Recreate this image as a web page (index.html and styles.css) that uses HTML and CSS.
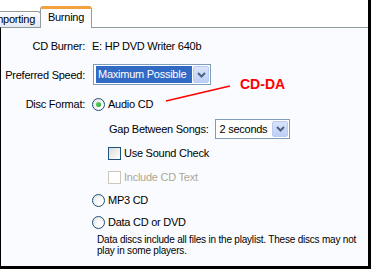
FILE: index.html
```html
<!DOCTYPE html>
<html>
<head>
    <title>Burning</title>
    <link rel="stylesheet" href="styles.css">
</head>
<body>
    <div class="window">
        <div class="tabs">
            <div class="tab tab-off">Importing</div>
            <div class="tab tab-on">Burning</div>
        </div>
        <div class="panel">
            <div class="row r-burner">
                <span class="label">CD Burner:</span>
                <span>E: HP DVD Writer 640b</span>
            </div>
            <div class="row r-speed">
                <span class="label">Preferred Speed:</span>
                <div class="combo combo-speed">
                    <span class="combo-text picked">Maximum Possible</span>
                    <span class="combo-btn"><svg width="9" height="6" viewBox="0 0 9 6"><path d="M1 1 L4.5 4.5 L8 1" fill="none" stroke="#4d6185" stroke-width="2"/></svg></span>
                </div>
            </div>
            <div class="row r-format">
                <span class="label">Disc Format:</span>
                <span class="radio on"></span>
                <span>Audio CD</span>
            </div>
            <div class="sub">
                <div class="row r-gap">
                    <span class="gap-label">Gap Between Songs:</span>
                    <div class="combo combo-gap">
                        <span class="combo-text">2 seconds</span>
                        <span class="combo-btn"><svg width="9" height="6" viewBox="0 0 9 6"><path d="M1 1 L4.5 4.5 L8 1" fill="none" stroke="#4d6185" stroke-width="2"/></svg></span>
                    </div>
                </div>
                <div class="row r-sound">
                    <span class="check"></span>
                    <span>Use Sound Check</span>
                </div>
                <div class="row r-cdtext disabled">
                    <span class="check"></span>
                    <span>Include CD Text</span>
                </div>
            </div>
            <div class="row opt r-mp3">
                <span class="radio"></span>
                <span>MP3 CD</span>
            </div>
            <div class="row opt r-data">
                <span class="radio"></span>
                <span>Data CD or DVD</span>
            </div>
            <p class="note">Data discs include all files in the playlist. These discs may not<br>play in some players.</p>
        </div>

        <!-- annotation drawn over the dialog -->
        <svg class="pointer" width="371" height="269"><line x1="166" y1="101" x2="230" y2="86" stroke="#f00" stroke-width="1.6"/></svg>
        <div class="callout">CD-DA</div>
    </div>
</body>
</html>
```

FILE: styles.css
```css
body {
    margin: 0;
    background-color: #fff;
    font-family: "Liberation Sans", Arial, sans-serif;
    font-size: 11px;
    letter-spacing: -0.25px;
    color: #000;
}
.window {
    position: relative;
    width: 371px;
    height: 269px;
    box-sizing: border-box;
    border-right: 3px solid #000;
    border-bottom: 3px solid #000;
    display: flex;
    flex-direction: column;
    overflow: hidden;
    white-space: nowrap;
}
.tabs {
    height: 27px;
    display: flex;
    align-items: flex-end;
    flex-shrink: 0;
}
.tab {
    box-sizing: border-box;
    border: 1px solid #919b9c;
    border-bottom: none;
    border-radius: 3px 3px 0 0;
}
.tab-off {
    width: 55px;
    height: 16px;
    margin-left: -14px;
    padding-right: 5px;
    text-align: right;
    line-height: 15px;
    background: linear-gradient(#fdfdfe, #e4e9f2);
}
.tab-on {
    position: relative;
    z-index: 1;
    width: 52px;
    height: 22px;
    margin-left: -1px;
    margin-bottom: -1px;
    border-top: 3px solid #f1a23c;
    text-align: center;
    line-height: 17px;
    background-color: #fcfcfe;
}
.panel {
    flex: 1;
    border-top: 1px solid #919b9c;
    border-left: 1px solid #000;
    background-color: #fafbfe;
}
.row {
    display: flex;
    align-items: center;
    height: 16px;
}
.label {
    width: 84px;
    margin-right: 7px;
    text-align: right;
}
.r-burner { margin-top: 10px; }
.r-speed { margin-top: 10px; height: 21px; }
.r-format { margin-top: 11px; }
.r-gap { margin-top: 7px; height: 20px; }
.r-sound { margin-top: 6px; }
.r-cdtext { margin-top: 8px; }
.r-mp3 { margin-top: 7px; }
.r-data { margin-top: 6px; }
.sub {
    padding-left: 107px;
}
.opt {
    padding-left: 91px;
}
.gap-label {
    margin-left: 1px;
    margin-right: 7px;
}
.combo {
    box-sizing: border-box;
    display: flex;
    align-items: center;
    height: 21px;
    padding: 1px;
    border: 1px solid #7f9db9;
    background-color: #fff;
}
.combo-speed {
    width: 118px;
    margin-left: 1px;
}
.combo-gap {
    width: 75px;
    height: 20px;
}
.combo-text {
    flex: 1;
    height: 100%;
    padding-left: 2px;
    line-height: 17px;
}
.combo-gap .combo-text {
    line-height: 16px;
}
.combo-text.picked {
    margin-left: 1px;
    margin-right: 1px;
    background-color: #316ac5;
    color: #fff;
}
.combo-btn {
    box-sizing: border-box;
    width: 16px;
    height: 100%;
    display: flex;
    align-items: center;
    justify-content: center;
    border: 1px solid #b9cbf2;
    border-radius: 2px;
    background: linear-gradient(#d9e4fb, #bccff5);
}
.radio {
    box-sizing: border-box;
    width: 13px;
    height: 13px;
    margin-right: 3px;
    border: 1px solid #1c5180;
    border-radius: 50%;
    background: radial-gradient(circle at 65% 65%, #fff 20%, #dcdcd7 100%);
    display: flex;
    align-items: center;
    justify-content: center;
}
.radio.on::after {
    content: "";
    width: 5px;
    height: 5px;
    border-radius: 50%;
    background: radial-gradient(circle at 35% 35%, #5fd35f, #21a121);
}
.check {
    box-sizing: border-box;
    width: 13px;
    height: 13px;
    margin-right: 3px;
    border: 1px solid #1c5180;
    background: linear-gradient(135deg, #dcdcd7, #fff);
}
.disabled {
    color: #aca899;
}
.disabled .check {
    border-color: #cac8bb;
    background: #fff;
}
.note {
    margin: 4px 0 0 96px;
    font-size: 10px;
    line-height: 11px;
    letter-spacing: -0.2px;
}
.pointer {
    position: absolute;
    left: 0;
    top: 0;
}
.callout {
    position: absolute;
    left: 240px;
    top: 76px;
    font-size: 14px;
    font-weight: bold;
    letter-spacing: 0;
    color: #f00;
}
```
